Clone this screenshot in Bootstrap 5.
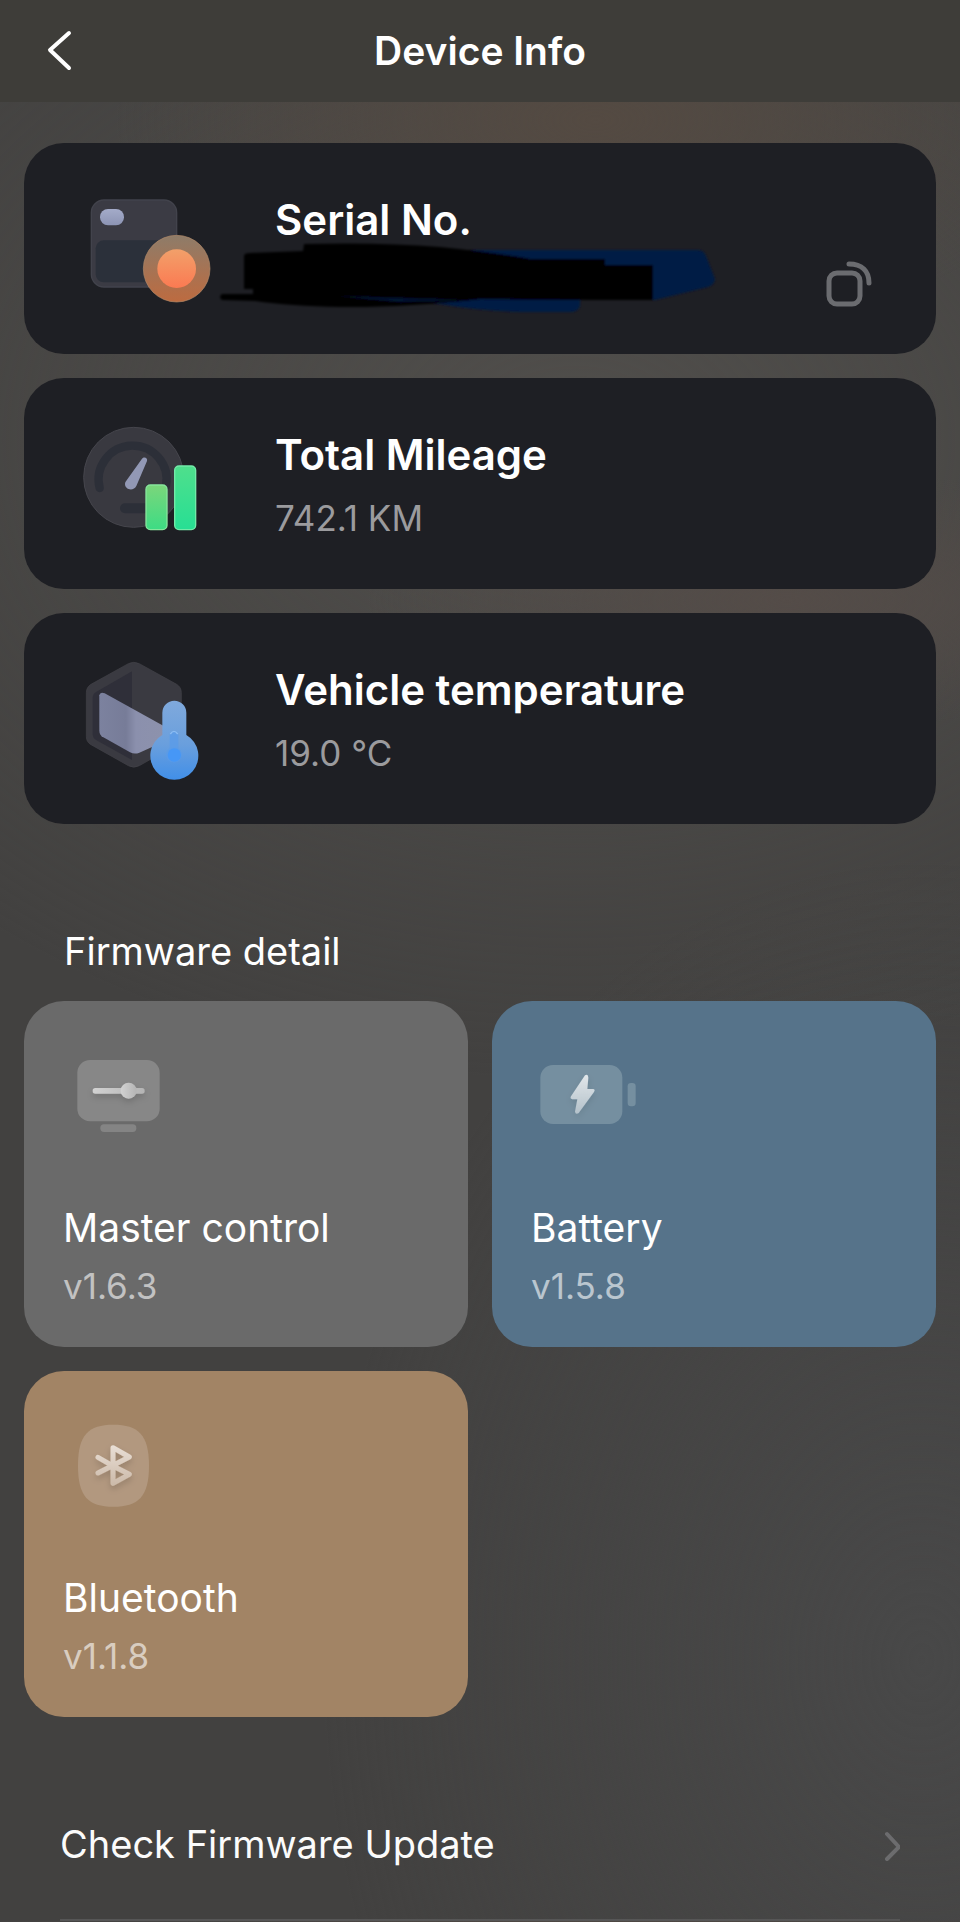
<!DOCTYPE html>
<html lang="en" data-bs-theme="dark">
<head>
<meta charset="utf-8">
<meta name="viewport" content="width=device-width, initial-scale=1">
<title>Device Info</title>
<link href="https://cdn.jsdelivr.net/npm/bootstrap@5.3.0/dist/css/bootstrap.min.css" rel="stylesheet">
<style>
body {
  font-family: Inter, "Liberation Sans", sans-serif;
  font-size: 39px;
  line-height: 48px;
  color: #fbfbfb;
  background:
    radial-gradient(ellipse 480px 230px at 62% 120px, #544a42 0, transparent 100%),
    radial-gradient(ellipse 420px 130px at 82% 600px, #544c48 0, transparent 100%),
    radial-gradient(ellipse 900px 640px at 60% 440px, #504e4b 0, transparent 100%),
    radial-gradient(ellipse 600px 800px at 96% 1660px, #484848 0, transparent 100%),
    #424140;
}
.topbar { height: 102px; background: #3e3d39; padding: 0 36px; }
.topbar h1 { font-size: 39px; line-height: 48px; font-weight: 600; }
.side-slot { width: 48px; height: 48px; }
.icon-btn { width: 48px; height: 48px; padding: 0; border: 0; background: none; color: inherit; }
.page-body { padding: 41px 24px 0; }
.stack { gap: 24px; }
.info-card { height: 211px; padding: 0 64px 0 36px; gap: 35px; border-radius: 40px; background: #1e1f24; }
.info-card h2 { font-size: 42px; line-height: 52px; font-weight: 600; }
.info-value { font-size: 35px; line-height: 42px; margin-top: 16px; min-height: 42px; color: #9b9b9e; }
.scribble { left: -65px; top: 41px; pointer-events: none; }
.copy-btn { margin-bottom: 45px; color: #6b6c70; }
.section-title { font-size: 38px; line-height: 48px; font-weight: 400; padding: 0 40px; margin: 103px 0 26px; }
.tiles { --bs-gutter-x: 24px; --bs-gutter-y: 24px; }
.tile { height: 346px; padding: 39px; border-radius: 40px; }
.tile h3 { font-size: 39px; line-height: 48px; font-weight: 400; margin: 54px 0 12px; }
.tile-version { font-size: 35px; line-height: 44px; color: rgba(255,255,255,.6); }
.tile-gray { background: #6a6a6a; }
.tile-blue { background: #56738a; }
.tile-tan { background: #a28465; }
.update-row { height: 153px; margin: 51px 36px 0; border-bottom: 2px solid #565656; font-size: 38px; }
</style>
</head>
<body>
<header class="topbar d-flex align-items-center justify-content-between">
  <button class="icon-btn" type="button" aria-label="Back">
    <svg class="d-block" width="48" height="48" fill="none" stroke="#fff" stroke-width="4" stroke-linecap="round" stroke-linejoin="round"><path d="M33 6 14 23 33 41"/></svg>
  </button>
  <h1 class="m-0">Device Info</h1>
  <span class="side-slot"></span>
</header>

<main class="page-body">
  <section class="stack d-flex flex-column">
    <article class="info-card d-flex align-items-center">
      <svg class="flex-shrink-0" width="180" height="140" viewBox="0 -4 540 420" aria-hidden="true">
        <defs>
          <linearGradient id="ring" x1="0" y1="0" x2="0" y2="1"><stop stop-color="#8e7c69"/><stop offset="1" stop-color="#bd6b40"/></linearGradient>
          <linearGradient id="core" x1="0" y1="0" x2="0" y2="1"><stop stop-color="#f2a06a"/><stop offset="1" stop-color="#fb7a52"/></linearGradient>
          <linearGradient id="pill" x1="0" y1="0" x2="0" y2="1"><stop stop-color="#a4abc9"/><stop offset="1" stop-color="#8c94b4"/></linearGradient>
        </defs>
        <rect x="94" y="59" width="256" height="261" rx="38" fill="#3b3b44" stroke="#42434c" stroke-width="4"/>
        <rect x="107" y="180" width="235" height="126" rx="24" fill="#2b303a"/>
        <rect x="120" y="86" width="72" height="49" rx="24" fill="url(#pill)"/>
        <circle cx="350" cy="265" r="100" fill="url(#ring)" stroke="#b28a68" stroke-width="2"/>
        <circle cx="350" cy="265" r="58" fill="url(#core)"/>
      </svg>
      <div class="position-relative flex-grow-1">
        <h2 class="m-0">Serial No.</h2>
        <div class="info-value"></div>
        <svg class="scribble position-absolute" width="520" height="85" viewBox="210 235 520 85" aria-hidden="true">
          <defs><filter id="soft" x="-5%" y="-20%" width="110%" height="140%"><feGaussianBlur stdDeviation="1.3"/></filter></defs>
          <g filter="url(#soft)">
            <path fill="#001a44" d="M470 250H698Q704 250 706 256L715 279Q715 284 708 287L655 300 580 299V306Q578 312 570 312H520Q480 311 440 304L330 298V290Z"/>
            <path fill="#000" d="M304 244Q380 242 440 247 490 252 530 259L605 259V265H653V300H590L480 299Q400 308 340 307 290 306 255 301L222 300Q218 297 222 294H253V289H244V256Q244 253 250 253L303 251Z"/>
            <path fill="#001a44" d="M335 296 470 300 400 302Z" opacity=".7"/>
          </g>
        </svg>
      </div>
      <button class="copy-btn icon-btn align-self-end" type="button" aria-label="Copy serial number">
        <svg class="d-block" width="48" height="48" fill="none" stroke="currentColor" stroke-width="5" stroke-linecap="round"><rect x="5" y="12" width="31" height="31" rx="8"/><path d="M25 3C38 3 45 10 45 22"/></svg>
      </button>
    </article>

    <article class="info-card d-flex align-items-center">
      <svg class="flex-shrink-0" width="180" height="140" viewBox="0 40 540 420" aria-hidden="true">
        <defs>
          <linearGradient id="barA" x1="0" y1="0" x2="0" y2="1"><stop stop-color="#7bd67b"/><stop offset="1" stop-color="#3ddc84"/></linearGradient>
          <linearGradient id="barB" x1="0" y1="0" x2="0" y2="1"><stop stop-color="#4fdf8c"/><stop offset="1" stop-color="#27df94"/></linearGradient>
        </defs>
        <circle cx="221" cy="230" r="150" fill="#393940" stroke="#45454c" stroke-width="3"/>
        <path d="M119 262A102 102 0 1 1 318 256" fill="none" stroke="#2c2f38" stroke-width="25" stroke-linecap="round"/>
        <rect x="180" y="308" width="90" height="30" rx="15" fill="#2c2f38"/>
        <path d="M246 174C251 167 264 170 261 181L229 256C222 272 196 269 195 251 195 246 197 243 200 239Z" fill="#9298b5"/>
        <rect x="258" y="253" width="63" height="134" rx="13" fill="url(#barA)" stroke="#86e69c" stroke-width="4"/>
        <rect x="344" y="196" width="63" height="191" rx="13" fill="url(#barB)" stroke="#72eaa8" stroke-width="4"/>
      </svg>
      <div class="flex-grow-1">
        <h2 class="m-0">Total Mileage</h2>
        <div class="info-value">742.1 KM</div>
      </div>
    </article>

    <article class="info-card d-flex align-items-center">
      <svg class="flex-shrink-0" width="180" height="140" viewBox="0 25 540 420" aria-hidden="true">
        <defs>
          <linearGradient id="cube" x1="0" x2="1"><stop stop-color="#7c829f"/><stop offset=".4" stop-color="#777c98"/><stop offset=".55" stop-color="#8b90ad"/><stop offset="1" stop-color="#8d92ac"/></linearGradient>
          <linearGradient id="thermo" x1="0" y1="0" x2="0" y2="1"><stop stop-color="#7fa9dc"/><stop offset=".55" stop-color="#6a9fdd"/><stop offset="1" stop-color="#418fe8"/></linearGradient>
        </defs>
        <path d="M205 69Q221 61 238 69L350 131Q364 140 364 156V288Q364 304 350 312L238 375Q221 384 205 375L93 312Q79 304 79 288V156Q79 140 93 131Z" fill="#3a3a41" stroke="#424249" stroke-width="2"/>
        <path d="M216 92 108 154Q98 160 98 172V282Q98 291 108 298L216 358Z" fill="#2f2f39"/>
        <path d="M118 164Q120 152 134 158L318 260V300L238 336Q224 342 210 335L130 290Q118 283 118 270Z" fill="url(#cube)"/>
        <path d="M307 216A36 36 0 0 1 379 216V283A72 72 0 1 1 307 283Z" fill="url(#thermo)"/>
        <path d="M329 283Q330 271 342 270 354 271 355 283V322A24 24 0 1 1 329 322Z" fill="#5a9be8" opacity=".75"/>
        <path d="M331 280Q342 264 353 280" fill="none" stroke="#8dbdf2" stroke-width="4"/>
        <circle cx="343" cy="343" r="20" fill="#4697f6"/>
      </svg>
      <div class="flex-grow-1">
        <h2 class="m-0">Vehicle temperature</h2>
        <div class="info-value">19.0 °C</div>
      </div>
    </article>
  </section>

  <h2 class="section-title">Firmware detail</h2>
  <section class="tiles row row-cols-2">
    <div class="col">
      <article class="tile tile-gray">
        <svg class="d-block" width="117" height="110" viewBox="9 0 351 330" aria-hidden="true">
          <defs>
            <linearGradient id="shine" x1="0" y1="0" x2="0" y2="1"><stop stop-color="#fff" stop-opacity=".78"/><stop offset="1" stop-color="#fff" stop-opacity=".45"/></linearGradient>
            <linearGradient id="track" x1="0" x2="1"><stop stop-color="#d2d2d2"/><stop offset="1" stop-color="#b4b4b4"/></linearGradient>
            <filter id="shade" x="-40%" y="-40%" width="180%" height="200%"><feDropShadow dx="0" dy="10" stdDeviation="10" flood-color="#000" flood-opacity=".16"/></filter>
          </defs>
          <rect x="52" y="60" width="247" height="184" rx="38" fill="#878787"/>
          <rect x="121" y="253" width="108" height="23" rx="11" fill="#848484"/>
          <g filter="url(#shade)"><rect x="98" y="144" width="156" height="17" rx="8" fill="url(#track)"/><circle cx="206" cy="152" r="24" fill="url(#track)"/></g>
        </svg>
        <h3>Master control</h3>
        <div class="tile-version">v1.6.3</div>
      </article>
    </div>
    <div class="col">
      <article class="tile tile-blue">
        <svg class="d-block" width="117" height="110" viewBox="33 0 351 330" aria-hidden="true">
          <rect x="61" y="75" width="246" height="177" rx="38" fill="#758fa0"/>
          <rect x="323" y="129" width="24" height="70" rx="10" fill="#758fa0"/>
          <path d="M195 106Q205 101 205 113L202 147H219Q227 148 222 156L176 219Q167 225 165 215L172 178H157Q149 176 153 169Z" fill="url(#shine)" filter="url(#shade)"/>
        </svg>
        <h3>Battery</h3>
        <div class="tile-version">v1.5.8</div>
      </article>
    </div>
    <div class="col">
      <article class="tile tile-tan">
        <svg class="d-block" width="117" height="110" viewBox="9 0 351 330" aria-hidden="true">
          <defs><linearGradient id="rune" gradientUnits="userSpaceOnUse" x1="0" y1="105" x2="0" y2="228"><stop stop-color="#e9dfd6"/><stop offset="1" stop-color="#cbb9a8"/></linearGradient></defs>
          <path d="M160 44C235 44 267 74 267 167S235 290 160 290 54 260 54 167 85 44 160 44Z" fill="#b2987f"/>
          <path d="M114 142 157 167 208 193 159 220V113L208 141 157 167 114 189" fill="none" stroke="url(#rune)" stroke-width="15" stroke-linecap="round" stroke-linejoin="round" filter="url(#shade)"/>
        </svg>
        <h3>Bluetooth</h3>
        <div class="tile-version">v1.1.8</div>
      </article>
    </div>
  </section>

  <a href="#update" class="update-row d-flex align-items-center justify-content-between text-reset text-decoration-none">
    <span>Check Firmware Update</span>
    <svg width="16" height="38" fill="none" stroke="#6c6c6e" stroke-width="4" stroke-linecap="round" stroke-linejoin="round" aria-hidden="true"><path d="M3 9 15 22 3 34"/></svg>
  </a>
</main>
<script src="https://cdn.jsdelivr.net/npm/bootstrap@5.3.0/dist/js/bootstrap.bundle.min.js"></script>
</body>
</html>
